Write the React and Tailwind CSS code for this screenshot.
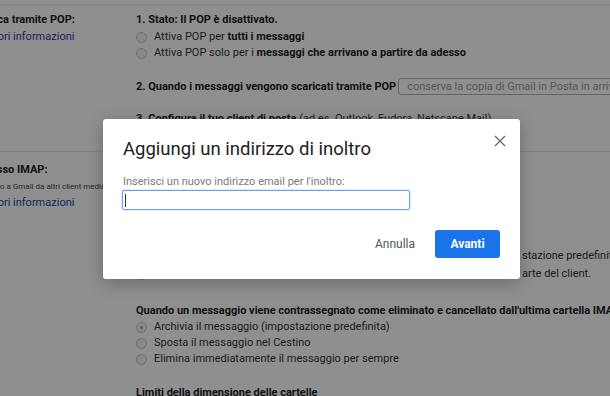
import React from 'react';

const Radio = ({ checked }) => (
  <span className="w-[11px] h-[11px] rounded-full border border-[#c4c4c4] bg-[#f4f4f4] flex items-center justify-center shrink-0">
    {checked && <span className="w-[3px] h-[3px] rounded-full bg-[#9a9a9a]" />}
  </span>
);

const Option = ({ checked, children }) => (
  <div className="flex items-center gap-[7px] h-[16px] whitespace-nowrap">
    <Radio checked={checked} />
    <span>{children}</span>
  </div>
);

const App = () => {
  return (
    <div
      className="relative w-[610px] h-[396px] overflow-hidden bg-white text-[#333] text-[11px] leading-[16px]"
      style={{ fontFamily: 'Roboto, "Liberation Sans", sans-serif' }}
    >
      <div className="h-[5px] border-b border-[#e6e6e6]" />

      {/* POP section */}
      <div className="flex h-[147px] border-b border-[#e2e2e2]">
        <div className="w-[136px] shrink-0 pt-[7px]">
          <div className="-ml-[28px] whitespace-nowrap">
            <div className="font-bold text-[#222]">Scarica tramite POP:</div>
            <div className="text-[#2d3aa6] mt-px">Ulteriori informazioni</div>
          </div>
        </div>
        <div className="flex flex-col pt-[7px] whitespace-nowrap">
          <div className="font-bold text-[#222]">1. Stato: Il POP è disattivato.</div>
          <div className="mt-px">
            <Option>Attiva POP per <b className="text-[#222]">tutti i messaggi</b></Option>
            <Option>Attiva POP solo per i <b className="text-[#222]">messaggi che arrivano a partire da adesso</b></Option>
          </div>
          <div className="mt-[17px] flex items-center gap-[2px] font-bold text-[#222]">
            <span>2. Quando i messaggi vengono scaricati tramite POP</span>
            <span className="h-[17px] px-[8px] border border-[#b5b5b5] rounded-[3px] font-normal text-[#9a9a9a] flex items-center">
              conserva la copia di Gmail in Posta in arrivo
            </span>
          </div>
          <div className="mt-[16px] font-bold text-[#222]">
            3. Configura il tuo client di posta <span className="font-normal text-[#333]">(ad es. Outlook, Eudora, Netscape Mail)</span>
          </div>
        </div>
      </div>

      {/* IMAP section */}
      <div className="flex">
        <div className="w-[136px] shrink-0 pt-[10px]">
          <div className="-ml-[28px] whitespace-nowrap">
            <div className="font-bold text-[#222]">Accesso IMAP:</div>
            <div className="text-[8px] leading-[17px] text-[#444]">(accesso a Gmail da altri client mediante IMAP)</div>
            <div className="text-[#2d3aa6]">Ulteriori informazioni</div>
          </div>
        </div>
        <div className="flex flex-col pt-[10px] whitespace-nowrap">
          <div className="font-bold text-[#222]">1. Stato: IMAP è disattivato</div>
          <Option>Attiva IMAP</Option>
          <Option>Disattiva IMAP</Option>
          <div className="mt-[22px] font-bold text-[#222]">2. Quando contrassegno un messaggio in IMAP come eliminato:</div>
          <div className="flex items-center h-[16px]">
            <span className="w-[386px] overflow-hidden flex items-center gap-[7px]">
              <Radio checked />
              <span>Auto-Expunge attivato - Aggiorna immediatamente il server. (impo</span>
            </span>
            <span>stazione predefinita)</span>
          </div>
          <div className="flex items-center h-[16px] mt-[2px]">
            <span className="w-[386px] overflow-hidden flex items-center gap-[7px]">
              <Radio />
              <span>Auto-Expunge disattivato - Attendi l'aggiornamento del server da p</span>
            </span>
            <span>arte del client.</span>
          </div>
          <div className="mt-[21px] font-bold text-[#222]">
            Quando un messaggio viene contrassegnato come eliminato e cancellato dall'ultima cartella IMAP visibile:
          </div>
          <Option checked>Archivia il messaggio (impostazione predefinita)</Option>
          <Option>Sposta il messaggio nel Cestino</Option>
          <Option>Elimina immediatamente il messaggio per sempre</Option>
          <div className="mt-[18px] font-bold text-[#222]">Limiti della dimensione delle cartelle</div>
        </div>
      </div>

      {/* overlay */}
      <div className="absolute inset-0 bg-black/[0.44]" />

      {/* dialog */}
      <div className="absolute left-[103px] top-[119px] w-[417px] h-[160px] bg-white rounded-[3px] shadow-[0_4px_16px_rgba(0,0,0,0.25)] flex flex-col px-[20px]">
        <div className="flex items-start justify-between pt-[18px]">
          <h2 className="text-[18.5px] leading-[24px] text-[#222] font-normal">Aggiungi un indirizzo di inoltro</h2>
          <button className="-mt-[2px] -mr-[6px] text-[#666]">
            <svg width="12" height="12" viewBox="0 0 12 12" fill="none" stroke="currentColor" strokeWidth="1.3">
              <path d="M1 1l10 10M11 1L1 11" />
            </svg>
          </button>
        </div>
        <div className="mt-[14px] text-[11px] leading-[14px] text-[#7a7a7a]">
          Inserisci un nuovo indirizzo email per l'inoltro:
        </div>
        <div className="mt-[1px] w-[288px] h-[20px] -ml-px border border-[#6d9ee8] rounded-[2px] shadow-[0_0_2px_rgba(77,144,254,0.6)] flex items-center px-[2px]">
          <span className="w-px h-[13px] bg-[#333]" />
        </div>
        <div className="mt-auto mb-[21px] flex items-center justify-end gap-[20px]">
          <span className="text-[12px] text-[#555]">Annulla</span>
          <button className="w-[65px] h-[28px] rounded-[3px] bg-[#1a73e8] text-white text-[12px] font-bold">Avanti</button>
        </div>
      </div>
    </div>
  );
};

export default App;
